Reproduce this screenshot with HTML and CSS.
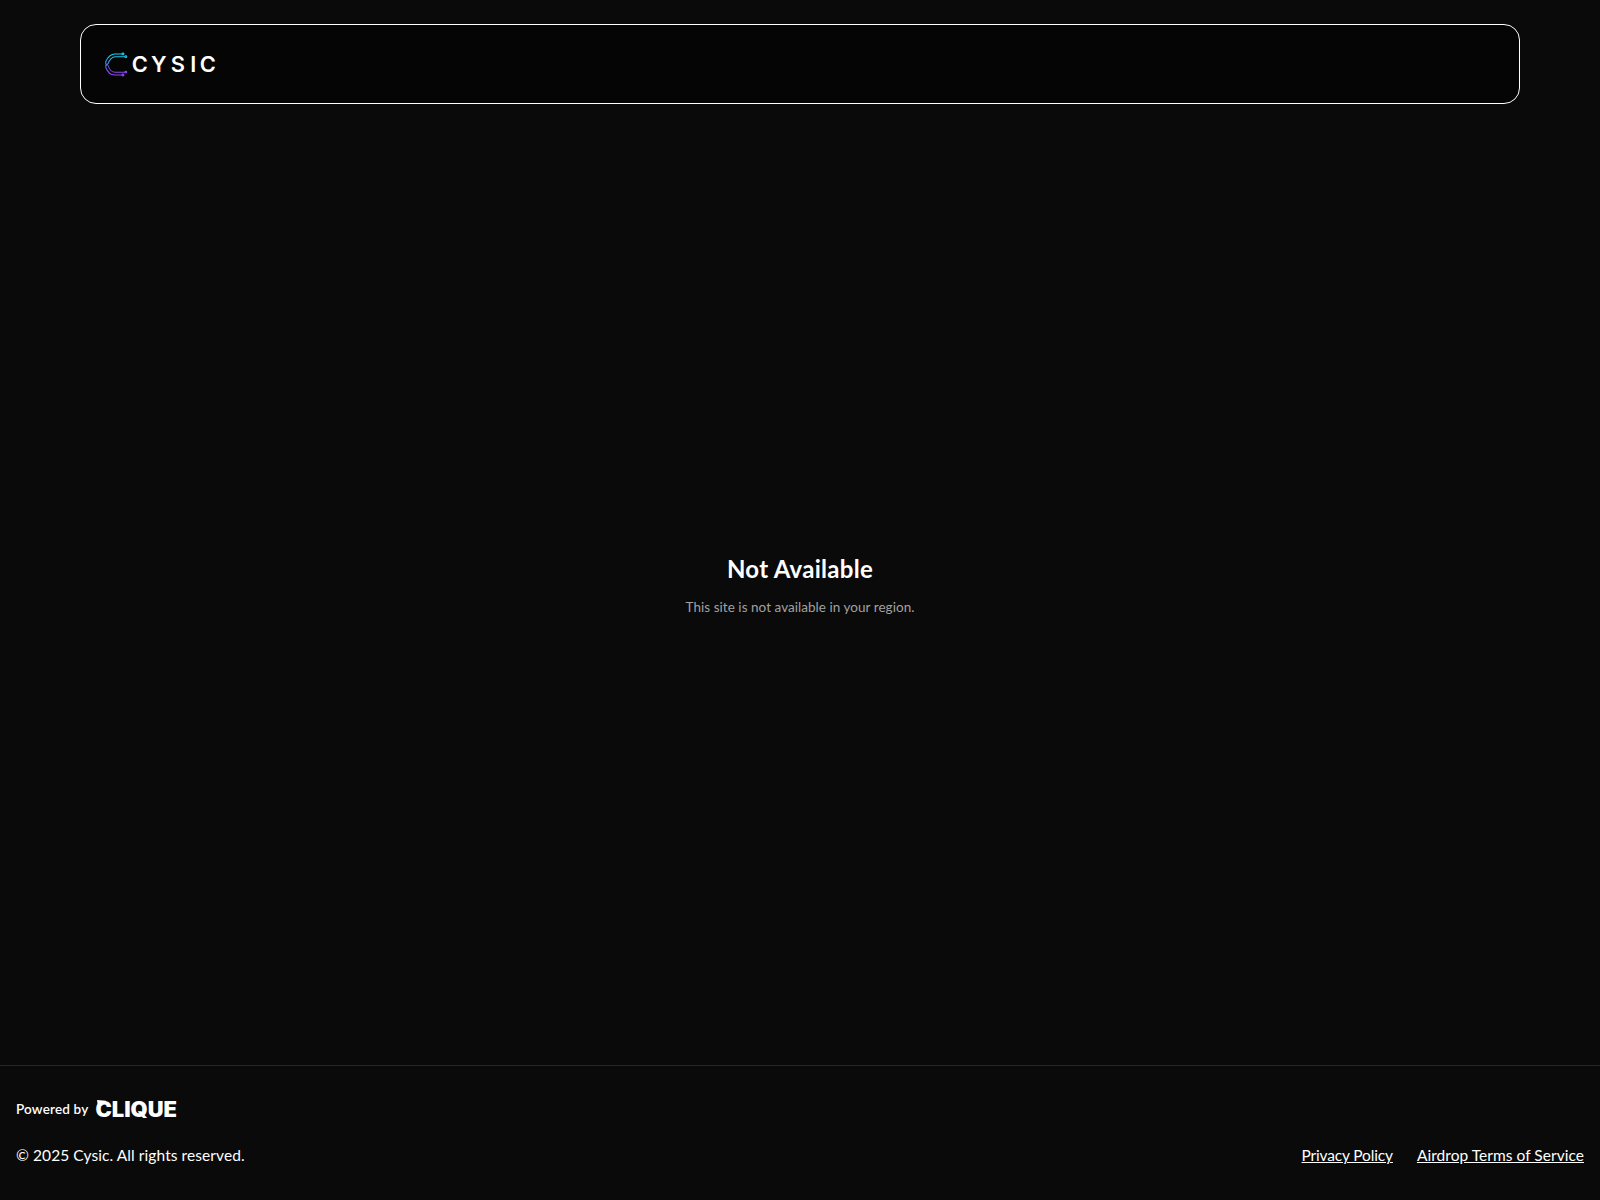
FILE: index.html
```html
<!DOCTYPE html>
<html lang="en">
<head>
<meta charset="utf-8">
<title>Cysic</title>
<link rel="stylesheet" href="styles.css">
</head>
<body>
<div class="page">
  <header class="header">
    <svg class="logo" width="112" height="24" viewBox="0 0 112 24" role="img" aria-label="Cysic">
      <defs>
        <linearGradient id="mark" gradientUnits="userSpaceOnUse" x1="0" y1="0" x2="0" y2="24">
          <stop offset="0" stop-color="#08e5f2"/>
          <stop offset=".5" stop-color="#4a80df"/>
          <stop offset=".6" stop-color="#6a58df"/>
          <stop offset="1" stop-color="#a040fa"/>
        </linearGradient>
      </defs>
      <g fill="none" stroke="url(#mark)" stroke-width="1.1" transform="translate(0 .5)">
        <path d="M17 1.500H9.500C5.500 2 2.500 5 .8 9V11.500L2.500 13"/>
        <path d="M20 4.200H10.500C7 4.200 4 7.500 3.200 11L.8 13V15C2.500 19.500 5.500 22.500 9.500 22.500H17"/>
        <path d="M3.200 13C4 17 7 19.800 10.500 19.800H20"/>
        <circle cx="18" cy="1.400" r=".9"/>
        <circle cx="20.800" cy="4.200" r=".9"/>
        <circle cx="20.800" cy="19.600" r=".9"/>
        <circle cx="18" cy="22.500" r=".9"/>
      </g>
      <text class="wordmark" transform="scale(1.04 1)" x="25.8 44.300 63.200 81.900 91.200" y="20">CYSIC</text>
    </svg>
  </header>
  <main class="main">
    <h1 class="title">Not Available</h1>
    <p class="message">This site is not available in your region.</p>
  </main>
  <footer class="footer">
    <div class="powered">
      <span class="powered-label">Powered by</span>
      <svg class="clique" width="81" height="18" viewBox="0 0 81 18" role="img" aria-label="Clique">
        <text class="clique-name" x="-.5" y="16.500" textLength="81.500" lengthAdjust="spacingAndGlyphs">CLIQUE</text>
        <path d="M1 0L10 .8L7 5L2 7Z" fill="#fff"/>
      </svg>
    </div>
    <div class="legal">
      <span class="copyright">© 2025 Cysic. All rights reserved.</span>
      <nav class="links">
        <a class="link link-privacy" href="#">Privacy Policy</a>
        <a class="link link-terms" href="#">Airdrop Terms of Service</a>
      </nav>
    </div>
  </footer>
</div>
</body>
</html>
```
FILE: styles.css
```css
* { box-sizing: border-box; }
body { margin: 0; background: #0a0a0a; color: #fff; font-family: Lato, sans-serif; }
.page { height: 1200px; display: flex; flex-direction: column; }
.header { height: 80px; margin: 24px 80px 0; padding: 0 24px; display: flex; align-items: center; background: #050505; border: 1px solid #fff; border-radius: 16px; flex: none; }
.logo { display: block; overflow: visible; }
.wordmark { font: 600 21px Inter, sans-serif; fill: #fff; }
.main { flex: 1; display: flex; flex-direction: column; align-items: center; justify-content: center; }
.title { margin: 0 0 12px; font-size: 24px; line-height: 32px; font-weight: 700; letter-spacing: .28px; }
.message { margin: 0; font-size: 13.5px; line-height: 20px; color: #a1a1a1; letter-spacing: .04px; }
.footer { height: 135px; flex: none; padding: 31px 16px 0; border-top: 1px solid #262626; }
.powered { height: 24px; display: flex; align-items: center; gap: 8px; }
.powered-label { font-size: 13.5px; font-weight: 600; line-height: 20px; width: 72px; white-space: nowrap; letter-spacing: .18px; }
.clique { display: block; overflow: visible; }
.clique-name { font: 900 21px Inter, sans-serif; fill: #fff; }
.legal { margin-top: 22px; display: flex; justify-content: space-between; align-items: center; font-size: 15.5px; line-height: 24px; }
.copyright { letter-spacing: .08px; }
.links { display: flex; gap: 24px; }
.link { color: #fff; text-decoration: underline; text-underline-offset: 1px; }
.link-privacy { letter-spacing: -.15px; }
.link-terms { letter-spacing: .04px; }
```
